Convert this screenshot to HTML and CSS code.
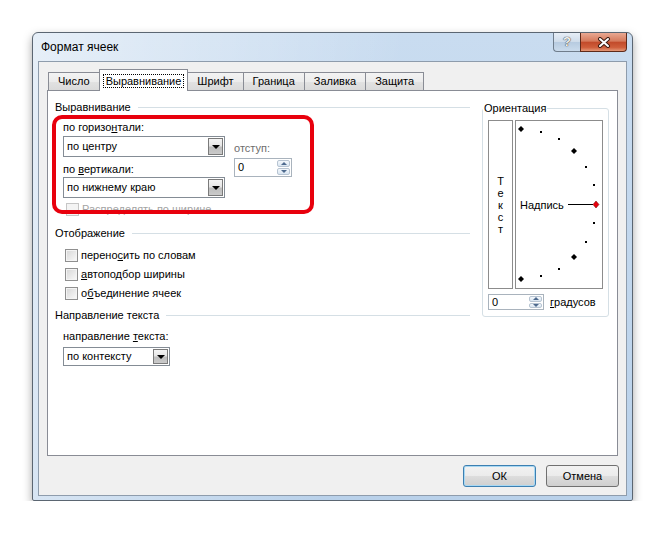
FILE: index.html
```html
<!DOCTYPE html>
<html lang="ru">

<head>
  <meta charset="UTF-8">
  <title>Формат ячеек</title>
  <link rel="stylesheet" href="styles.css">
</head>

<body>
  <div class="window">
    <div class="titlebar">
      <span class="title">Формат ячеек</span>
      <div class="caption-buttons">
        <span class="caption-help">?</span>
        <span class="caption-close">
          <svg width="14" height="11" viewBox="0 0 14 11">
            <path d="M3 2 L11 9 M11 2 L3 9" stroke="#3b1a10" stroke-width="4" stroke-linecap="round" />
            <path d="M3 2 L11 9 M11 2 L3 9" stroke="#fff" stroke-width="2" stroke-linecap="round" />
          </svg>
        </span>
      </div>
    </div>

    <div class="client">
      <div class="tabs">
        <span class="tab">Число</span>
        <span class="tab active"><span class="focus">Выравнивание</span></span>
        <span class="tab">Шрифт</span>
        <span class="tab">Граница</span>
        <span class="tab">Заливка</span>
        <span class="tab">Защита</span>
      </div>

      <div class="panel">
        <div class="left-col">
          <div class="group-title">Выравнивание</div>
          <div class="align-row">
            <div class="align-fields">
              <div class="label">по горизо<u>н</u>тали:</div>
              <div class="combo combo-first">
                <span class="combo-text">по центру</span>
                <span class="combo-btn"></span>
              </div>
              <div class="label label-second">по <u>в</u>ертикали:</div>
              <div class="combo combo-second">
                <span class="combo-text">по нижнему краю</span>
                <span class="combo-btn"></span>
              </div>
            </div>
            <div class="indent-box">
              <div class="label muted">отступ:</div>
              <div class="spin spin-indent">
                <span class="spin-value">0</span>
                <span class="spin-btns"><span class="spin-up"></span><span class="spin-down"></span></span>
              </div>
            </div>
          </div>
          <div class="check-row disabled"><span class="checkbox"></span>Распределять по ширине</div>

          <div class="group-title group-display">Отображение</div>
          <div class="checks">
            <div class="check-row"><span class="checkbox"></span>перено<u>с</u>ить по словам</div>
            <div class="check-row"><span class="checkbox"></span><u>а</u>втоподбор ширины</div>
            <div class="check-row"><span class="checkbox"></span>о<u>б</u>ъединение ячеек</div>
          </div>

          <div class="group-title group-direction">Направление текста</div>
          <div class="label label-direction">направление <u>т</u>екста:</div>
          <div class="combo combo-small">
            <span class="combo-text">по контексту</span>
            <span class="combo-btn"></span>
          </div>
        </div>

        <fieldset class="orient">
          <legend>Ориентация</legend>
          <div class="orient-body">
            <div class="vtext">
              <span>Т</span><span>е</span><span>к</span><span>с</span><span>т</span>
            </div>
            <div class="dial">
              <svg width="86" height="167" viewBox="0 0 86 167">
                <g fill="#000">
                  <polygon points="5,5 8,8 5,11 2,8" />
                  <polygon points="58,27 61,30 58,33 55,30" />
                  <polygon points="58,133 61,136 58,139 55,136" />
                  <polygon points="5,155 8,158 5,161 2,158" />
                </g>
                <g fill="#000" shape-rendering="crispEdges">
                  <rect x="24" y="10" width="2" height="2" />
                  <rect x="42" y="17" width="2" height="2" />
                  <rect x="69" y="45" width="2" height="2" />
                  <rect x="77" y="63" width="2" height="2" />
                  <rect x="77" y="101" width="2" height="2" />
                  <rect x="69" y="120" width="2" height="2" />
                  <rect x="42" y="147" width="2" height="2" />
                  <rect x="24" y="154" width="2" height="2" />
                  <rect x="52" y="83" width="25" height="1" />
                </g>
                <polygon points="80,80 83,83.5 80,87 77,83.5" fill="#e8000d" stroke="#600" stroke-width="0.5" />
                <text x="4" y="88" class="dial-text">Надпись</text>
              </svg>
            </div>
          </div>
          <div class="degrees">
            <div class="spin spin-deg">
              <span class="spin-value">0</span>
              <span class="spin-btns"><span class="spin-up"></span><span class="spin-down"></span></span>
            </div>
            <span class="deg-label"><u>г</u>радусов</span>
          </div>
        </fieldset>
      </div>

      <div class="footer">
        <button class="btn btn-default">ОК</button>
        <button class="btn">Отмена</button>
      </div>
    </div>

    <div class="annotation"></div>
  </div>
</body>

</html>
```

FILE: styles.css
```css
body {
  margin: 0;
  background-color: #fff;
  font-family: "Liberation Sans", Arial, sans-serif;
  font-size: 11px;
  color: #000;
}

u {
  text-underline-offset: 1px;
}

.window {
  position: relative;
  width: 601px;
  height: 469px;
  box-sizing: border-box;
  margin: 32px 0 0 32px;
  padding: 0 5px 4px;
  border: 1px solid #5b6672;
  border-radius: 6px 6px 2px 2px;
  background:
    linear-gradient(100deg, rgba(255, 255, 255, 0.55), rgba(255, 255, 255, 0) 55%),
    linear-gradient(180deg, #c9dcf0, #b9d1ea);
  box-shadow: 0 4px 10px rgba(0, 0, 0, 0.35);
}

.titlebar {
  display: flex;
  justify-content: space-between;
  height: 28px;
}

.title {
  font-size: 12px;
  line-height: 28px;
  padding-left: 3px;
}

.caption-buttons {
  display: flex;
  height: 19px;
}

.caption-help {
  width: 27px;
  height: 19px;
  box-sizing: border-box;
  border: 1px solid #6f7d8c;
  border-top: none;
  border-right: none;
  border-radius: 0 0 0 4px;
  background: linear-gradient(#e7eef6, #cfdcea 48%, #b7cbe0 52%, #cadbec);
  color: #f2f2f2;
  font-weight: bold;
  font-size: 13px;
  line-height: 18px;
  text-align: center;
  text-shadow: 0 0 1px #333, 0 0 1px #333;
}

.caption-close {
  width: 47px;
  height: 19px;
  box-sizing: border-box;
  border: 1px solid #5e2a1a;
  border-top: none;
  border-radius: 0 0 4px 0;
  background: linear-gradient(#e9a892, #d57a5c 45%, #c24b2b 52%, #cf5e3b 80%, #e39878);
  display: flex;
  align-items: center;
  justify-content: center;
}

.client {
  height: 435px;
  box-sizing: border-box;
  border: 1px solid #8e9cac;
  background-color: #f0f0f0;
}

/* tabs */

.tabs {
  display: flex;
  align-items: flex-end;
  height: 28px;
  padding-left: 10px;
  box-sizing: border-box;
  position: relative;
  z-index: 1;
}

.tab {
  height: 18px;
  box-sizing: border-box;
  margin-left: -1px;
  padding: 0 9px;
  border: 1px solid #898c95;
  border-bottom: none;
  line-height: 17px;
  background: linear-gradient(#f3f3f3, #ececec 50%, #e2e2e2 51%, #dadada);
}

.tab.active {
  height: 22px;
  margin-bottom: -1px;
  padding: 0 3px;
  background: #fff;
  display: flex;
  align-items: center;
  position: relative;
  z-index: 2;
}

.focus {
  border: 1px dotted #000;
  padding: 0 2px;
  line-height: 12px;
}

/* panel */

.panel {
  display: flex;
  gap: 12px;
  width: 571px;
  height: 366px;
  box-sizing: border-box;
  margin-left: 8px;
  padding: 9px 7px 0;
  border: 1px solid #898c95;
  background-color: #fff;
}

.left-col {
  width: 415px;
}

.group-title {
  display: flex;
  align-items: center;
  line-height: 14px;
}

.group-title::after {
  content: "";
  flex: 1;
  margin-left: 7px;
  border-top: 1px solid #d5dfe5;
}

.group-display {
  margin-top: 10px;
}

.group-direction {
  margin-top: 8px;
}

.label {
  line-height: 14px;
}

.muted {
  color: #6d6d6d;
}

.align-row {
  display: flex;
  margin-top: 6px;
  padding-left: 8px;
}

.align-fields {
  width: 162px;
}

.label-second {
  margin-top: 5px;
}

.combo {
  display: flex;
  height: 21px;
  box-sizing: border-box;
  border: 1px solid #848c95;
  background-color: #fff;
}

.combo-first {
  margin-top: 2px;
}

.combo-second {
  margin-top: 1px;
}

.combo-text {
  flex: 1;
  padding-left: 3px;
  line-height: 19px;
}

.combo-btn {
  width: 15px;
  margin: 1px;
  box-sizing: border-box;
  border: 1px solid #7a7a7a;
  background: linear-gradient(#f4f4f4, #e6e6e6 45%, #bdbdbd 55%, #cacaca);
  display: flex;
  justify-content: center;
  padding-top: 6px;
}

.combo-btn::after {
  content: "";
  width: 0;
  height: 0;
  border-left: 4px solid transparent;
  border-right: 4px solid transparent;
  border-top: 4px solid #000;
}

.combo-small {
  width: 107px;
  height: 19px;
  margin: 4px 0 0 8px;
}

.combo-small .combo-text {
  line-height: 17px;
}

.combo-small .combo-btn {
  padding-top: 5px;
}

.indent-box {
  margin-left: 9px;
  padding-top: 21px;
}

/* spinners */

.spin {
  display: flex;
  box-sizing: border-box;
  border: 1px solid #a9b3bd;
  background-color: #fff;
}

.spin-indent {
  width: 58px;
  height: 19px;
  margin-top: 3px;
}

.spin-value {
  flex: 1;
  padding-left: 3px;
  line-height: 17px;
}

.spin-btns {
  width: 13px;
  display: flex;
  flex-direction: column;
  padding: 1px;
  gap: 1px;
}

.spin-up,
.spin-down {
  flex: 1;
  border: 1px solid #b7c4d2;
  border-radius: 2px;
  background: linear-gradient(#f4f8fc, #d9e5f1);
  display: flex;
  align-items: center;
  justify-content: center;
}

.spin-up::after,
.spin-down::after {
  content: "";
  width: 0;
  height: 0;
  border-left: 3px solid transparent;
  border-right: 3px solid transparent;
}

.spin-up::after {
  border-bottom: 3px solid #4e6a8e;
}

.spin-down::after {
  border-top: 3px solid #4e6a8e;
}

/* checkboxes */

.check-row {
  display: flex;
  align-items: center;
  height: 14px;
  padding-left: 10px;
}

.check-row + .check-row {
  margin-top: 5px;
}

.checks {
  margin-top: 8px;
}

.checkbox {
  width: 13px;
  height: 13px;
  box-sizing: border-box;
  margin-right: 3px;
  border: 1px solid #8f8f8f;
  background: linear-gradient(135deg, #d6d6d6, #fafafa);
  box-shadow: inset 0 0 0 1px #f4f4f4;
}

.check-row.disabled {
  margin-top: 4px;
  padding-left: 11px;
  color: #a3a3a3;
}

.check-row.disabled .checkbox {
  border-color: #c6c6c6;
  background: #f4f4f4;
}

.label-direction {
  margin-top: 7px;
  padding-left: 8px;
}

/* orientation */

.orient {
  width: 127px;
  box-sizing: border-box;
  margin: 1px 0 0;
  padding: 0 0 6px;
  border: 1px solid #d5dfe5;
  border-radius: 3px;
  align-self: flex-start;
  min-width: 0;
}

.orient legend {
  padding: 0 1px;
  line-height: 14px;
}

.orient-body {
  display: flex;
  gap: 2px;
  padding: 5px 0 0 5px;
}

.vtext {
  width: 25px;
  height: 169px;
  box-sizing: border-box;
  border: 1px solid #8c8c8c;
  display: flex;
  flex-direction: column;
  align-items: center;
  justify-content: center;
  line-height: 12px;
}

.dial {
  width: 88px;
  height: 169px;
  box-sizing: border-box;
  border: 1px solid #8c8c8c;
}

.dial svg {
  display: block;
}

.dial-text {
  font-family: "Liberation Sans", Arial, sans-serif;
  font-size: 11px;
}

.degrees {
  display: flex;
  align-items: center;
  margin: 5px 0 0 5px;
}

.spin-deg {
  width: 56px;
  height: 16px;
}

.spin-deg .spin-value {
  line-height: 14px;
}

.deg-label {
  margin-left: 6px;
}

/* footer */

.footer {
  display: flex;
  justify-content: flex-end;
  gap: 10px;
  padding: 9px 7px 0 0;
}

.btn {
  width: 73px;
  height: 22px;
  padding: 0;
  font: inherit;
  color: #000;
  border: 1px solid #707070;
  border-radius: 3px;
  background: linear-gradient(#f2f2f2, #ebebeb 50%, #dddddd 51%, #cfcfcf);
}

.btn-default {
  border-color: #3c7fb1;
  box-shadow: inset 0 0 0 1px #a8d8f3;
}

/* red frame drawn over the screenshot */

.annotation {
  position: absolute;
  left: 19px;
  top: 82px;
  width: 262px;
  height: 99px;
  box-sizing: border-box;
  border: 4px solid #e8000d;
  border-radius: 10px;
}
```
